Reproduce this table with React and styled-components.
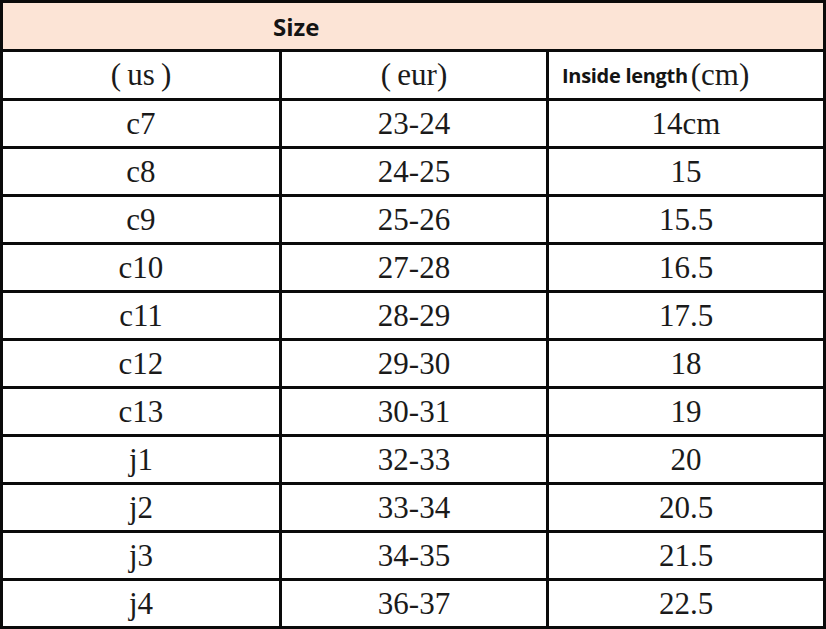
import { Fragment } from 'react';
import styled, { createGlobalStyle } from 'styled-components';

const GlobalStyle = createGlobalStyle`
  html, body {
    margin: 0;
    padding: 0;
    background: #fff;
  }
`;

const Table = styled.div`
  display: grid;
  grid-template-columns: 276px 264px 274px;
  grid-template-rows: 46px 46px repeat(11, 45px);
  gap: 3px;
  padding: 3px;
  width: 826px;
  box-sizing: border-box;
  background: #0a0a0a;
`;

const TitleCell = styled.div`
  grid-column: 1 / -1;
  background: #fce4d6;
  display: flex;
  align-items: center;
  padding-left: 270px;
  font-family: "Open Sans", "Liberation Sans", sans-serif;
  font-weight: 700;
  font-size: 24px;
  color: #141414;
`;

const Cell = styled.div`
  background: #fff;
  display: flex;
  align-items: center;
  justify-content: ${(p) => (p.$left ? 'flex-start' : 'center')};
  padding-left: ${(p) => (p.$left ? '13px' : '0')};
  font-family: "Liberation Serif", "DejaVu Serif", serif;
  font-size: 31px;
  color: #1a1a1a;
  white-space: nowrap;
`;

const Label = styled.span`
  font-family: "Open Sans", "Liberation Sans", sans-serif;
  font-weight: 700;
  font-size: 20px;
  letter-spacing: -0.3px;
  margin-right: 3px;
  color: #141414;
`;

const rows = [
  ['c7', '23-24', '14cm'],
  ['c8', '24-25', '15'],
  ['c9', '25-26', '15.5'],
  ['c10', '27-28', '16.5'],
  ['c11', '28-29', '17.5'],
  ['c12', '29-30', '18'],
  ['c13', '30-31', '19'],
  ['j1', '32-33', '20'],
  ['j2', '33-34', '20.5'],
  ['j3', '34-35', '21.5'],
  ['j4', '36-37', '22.5'],
];

export default function App() {
  return (
    <>
      <GlobalStyle />
      <Table>
        <TitleCell>Size</TitleCell>
        <Cell>(&thinsp;us&thinsp;)</Cell>
        <Cell>(&thinsp;eur)</Cell>
        <Cell $left>
          <Label>Inside length</Label>(cm)
        </Cell>
        {rows.map((r) => (
          <Fragment key={r[0]}>
            <Cell>{r[0]}</Cell>
            <Cell>{r[1]}</Cell>
            <Cell>{r[2]}</Cell>
          </Fragment>
        ))}
      </Table>
    </>
  );
}
